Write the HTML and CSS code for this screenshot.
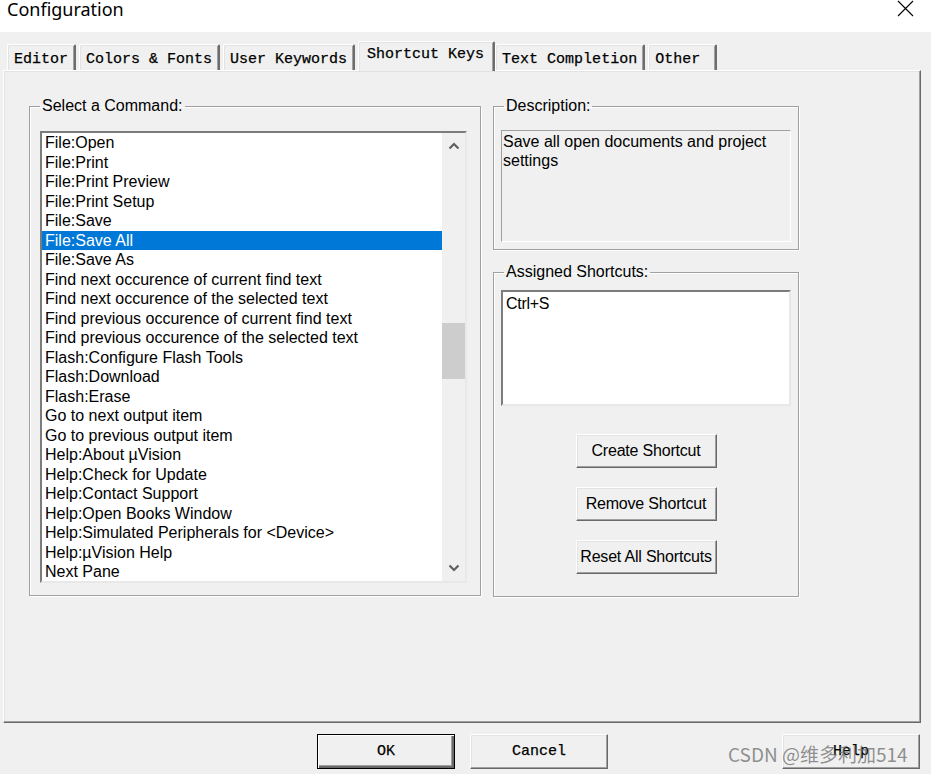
FILE: index.html
```html
<!DOCTYPE html>
<html>
<head>
<meta charset="utf-8">
<title>Configuration</title>
<link rel="stylesheet" href="styles.css">
</head>
<body>
<div class="window">
  <div class="titlebar">
    <span class="title">Configuration</span>
    <svg class="close" width="17" height="17" viewBox="0 0 17 17"><path d="M1 1L16 16M16 1L1 16" stroke="#000" stroke-width="1.1" fill="none"/></svg>
  </div>

  <div class="tabs">
    <div class="tab">Editor</div>
    <div class="tab">Colors &amp; Fonts</div>
    <div class="tab">User Keywords</div>
    <div class="tab active">Shortcut Keys</div>
    <div class="tab">Text Completion</div>
    <div class="tab tab-other">Other</div>
  </div>

  <div class="panel">
    <fieldset class="group group-commands">
      <legend>Select a Command:</legend>
      <div class="listbox commands">
        <ul class="items">
          <li>File:Open</li>
          <li>File:Print</li>
          <li>File:Print Preview</li>
          <li>File:Print Setup</li>
          <li>File:Save</li>
          <li class="selected">File:Save All</li>
          <li>File:Save As</li>
          <li>Find next occurence of current find text</li>
          <li>Find next occurence of the selected text</li>
          <li>Find previous occurence of current find text</li>
          <li>Find previous occurence of the selected text</li>
          <li>Flash:Configure Flash Tools</li>
          <li>Flash:Download</li>
          <li>Flash:Erase</li>
          <li>Go to next output item</li>
          <li>Go to previous output item</li>
          <li>Help:About µVision</li>
          <li>Help:Check for Update</li>
          <li>Help:Contact Support</li>
          <li>Help:Open Books Window</li>
          <li>Help:Simulated Peripherals for &lt;Device&gt;</li>
          <li>Help:µVision Help</li>
          <li>Next Pane</li>
        </ul>
        <div class="scrollbar">
          <div class="arrow"><svg width="12" height="8" viewBox="0 0 12 8"><path d="M1.5 6.5L6 2L10.5 6.5" stroke="#606060" stroke-width="2.2" fill="none"/></svg></div>
          <div class="track"><div class="thumb" style="margin-top:164px"></div></div>
          <div class="arrow"><svg width="12" height="8" viewBox="0 0 12 8"><path d="M1.5 1.5L6 6L10.5 1.5" stroke="#606060" stroke-width="2.2" fill="none"/></svg></div>
        </div>
      </div>
    </fieldset>

    <div class="side">
      <fieldset class="group group-desc">
        <legend>Description:</legend>
        <div class="static">Save all open documents and project settings</div>
      </fieldset>
      <fieldset class="group group-assigned">
        <legend>Assigned Shortcuts:</legend>
        <div class="listbox shortcuts">Ctrl+S</div>
        <div class="btn-col">
          <button class="btn">Create Shortcut</button>
          <button class="btn">Remove Shortcut</button>
          <button class="btn">Reset All Shortcuts</button>
        </div>
      </fieldset>
    </div>
  </div>

  <div class="footer">
    <button class="dlg-btn default">OK</button>
    <button class="dlg-btn">Cancel</button>
    <button class="dlg-btn help">Help</button>
  </div>

  <div class="watermark">CSDN @维多利加514</div>
</div>
</body>
</html>
```

FILE: styles.css
```css
* { box-sizing: border-box; }

html, body {
  margin: 0;
  padding: 0;
}

body {
  width: 931px;
  height: 774px;
  overflow: hidden;
  background: #f0f0f0;
  font-family: "Liberation Sans", Arial, sans-serif;
  color: #000;
}

.window {
  position: relative;
  width: 931px;
  height: 774px;
}

.titlebar {
  height: 32px;
  background: #fff;
  display: flex;
  justify-content: space-between;
  align-items: flex-start;
}

.title {
  font-family: "Noto Sans", "Noto Sans CJK SC", sans-serif;
  font-size: 18px;
  line-height: 20px;
  padding-left: 7px;
  margin-top: -1px;
}

.close {
  margin-right: 17px;
  margin-top: 0;
}

/* Tabs */
.tabs {
  display: flex;
  align-items: flex-end;
  height: 38px;
  padding-left: 7px;
  position: relative;
  z-index: 2;
}

.tab {
  font-family: "Liberation Mono", "Courier New", monospace;
  font-size: 15px;
  height: 26px;
  line-height: 26px;
  padding: 2px 6px 0 6px;
  margin-right: 3px;
  border-top: 1px solid #fff;
  border-left: 1px solid #fff;
  border-right: 2px solid #6d6d6d;
  border-top-left-radius: 2px;
  border-top-right-radius: 2px;
  box-shadow: inset 1px 1px 0 #e3e3e3, inset -1px 0 0 #a0a0a0;
  background: #f0f0f0;
  white-space: pre;
  -webkit-text-stroke: 0.25px #000;
}

.tab.active {
  height: 30px;
  line-height: 26px;
  padding: 0 9px 0 8px;
  margin-left: 0;
  margin-right: 0;
  margin-bottom: -1px;
}

.tab-other {
  padding-right: 15px;
}

/* Panel */
.panel {
  margin-left: 3px;
  width: 918px;
  height: 653px;
  border-top: 1px solid #fff;
  border-left: 1px solid #fff;
  border-right: 1px solid #696969;
  border-bottom: 1px solid #696969;
  box-shadow: inset -1px -1px 0 #a0a0a0, inset 1px 1px 0 #e3e3e3;
  padding: 26px 0 0 25px;
  display: flex;
  align-items: flex-start;
  position: relative;
  z-index: 1;
}

/* Group boxes */
.group {
  margin: 0;
  border: 1px solid #a0a0a0;
  box-shadow: 1px 1px 0 #fff, inset 1px 1px 0 #fff;
  font-size: 16px;
  min-width: 0;
}

.group legend {
  padding: 0 2px;
  margin-left: 0;
  line-height: 18px;
  font-size: 16px;
}

.group-commands {
  width: 452px;
  padding: 16px 13px 12px 10px;
}

.side {
  margin-left: 12px;
  width: 306px;
  display: flex;
  flex-direction: column;
  gap: 13px;
}

.side .group legend {
  margin-left: 3px;
}

.group-desc {
  padding: 15px 7px 7px 7px;
}

.group-assigned {
  padding: 9px 7px 22px 7px;
}

/* List boxes */
.listbox {
  background: #fff;
  border-top: 2px solid #7c7c7c;
  border-left: 2px solid #7c7c7c;
  border-right: 2px solid #e8e8e8;
  border-bottom: 2px solid #e8e8e8;
}

.commands {
  width: 427px;
  height: 452px;
  display: flex;
}

.items {
  list-style: none;
  margin: 0;
  padding: 0;
  flex: 1;
  min-width: 0;
  overflow: hidden;
}

.items li {
  height: 19.5px;
  line-height: 19.5px;
  padding-left: 3px;
  font-size: 16px;
  white-space: nowrap;
}

.items li.selected {
  background: #0078d7;
  color: #fff;
  margin-left: -1px;
  padding-left: 4px;
}

.scrollbar {
  width: 23px;
  background: #f0f0f0;
  display: flex;
  flex-direction: column;
}

.arrow {
  height: 26px;
  display: flex;
  align-items: center;
  justify-content: center;
}

.track {
  flex: 1;
}

.thumb {
  height: 56px;
  background: #cdcdcd;
}

.static {
  height: 112px;
  border-top: 1px solid #a0a0a0;
  border-left: 1px solid #a0a0a0;
  border-right: 1px solid #fff;
  border-bottom: 1px solid #fff;
  padding: 1px 0 0 1px;
  font-size: 16px;
  line-height: 19px;
}

.shortcuts {
  height: 116px;
  padding: 2px 0 0 3px;
  font-size: 16px;
  line-height: 19px;
  letter-spacing: -0.3px;
}

.btn-col {
  display: flex;
  flex-direction: column;
  align-items: center;
  gap: 19px;
  margin-top: 28px;
}

.btn {
  width: 141px;
  height: 34px;
  background: #f0f0f0;
  font-family: "Liberation Sans", Arial, sans-serif;
  font-size: 16px;
  letter-spacing: -0.2px;
  color: #000;
  border-top: 1px solid #fff;
  border-left: 1px solid #fff;
  border-right: 1px solid #696969;
  border-bottom: 1px solid #696969;
  box-shadow: inset -1px -1px 0 #a0a0a0, inset 1px 1px 0 #e3e3e3;
  padding: 0;
}

/* Footer */
.footer {
  display: flex;
  align-items: center;
  margin-top: 11px;
  padding-left: 317px;
  gap: 15px;
}

.dlg-btn {
  width: 138px;
  height: 35px;
  background: #f0f0f0;
  font-family: "Liberation Mono", "Courier New", monospace;
  font-size: 15px;
  color: #000;
  -webkit-text-stroke: 0.25px #000;
  border-top: 1px solid #fff;
  border-left: 1px solid #fff;
  border-right: 1px solid #696969;
  border-bottom: 1px solid #696969;
  box-shadow: inset -1px -1px 0 #a0a0a0, inset 1px 1px 0 #e3e3e3;
  padding: 0;
}

.dlg-btn.default {
  border: 1px solid #000;
  box-shadow: inset 1px 1px 0 #fff, inset -2px -2px 0 #696969, inset -3px -3px 0 #a0a0a0;
}

.dlg-btn.help {
  margin-left: auto;
  margin-right: 11px;
}

.watermark {
  position: absolute;
  left: 728px;
  top: 742px;
  font-family: "Noto Sans CJK SC", "Noto Sans", sans-serif;
  font-size: 19px;
  line-height: 24px;
  color: rgba(110, 110, 110, 0.75);
  white-space: nowrap;
}
```
